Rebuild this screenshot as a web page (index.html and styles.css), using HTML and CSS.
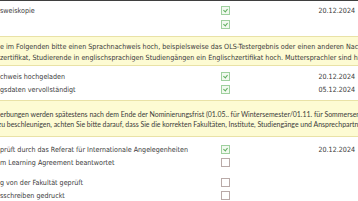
FILE: index.html
```html
<!DOCTYPE html>
<html lang="de">
<head>
<meta charset="utf-8">
<link rel="stylesheet" href="styles.css">
</head>
<body>
<div class="page">
  <div class="topline"></div>
  <div class="row r1"><span class="label">sweiskopie</span><span class="box on"></span><span class="date">20.12.2024</span></div>
  <div class="row r2"><span class="label"></span><span class="box on"></span><span class="date"></span></div>
  <div class="note note1">
    <p class="nl">e im Folgenden bitte einen Sprachnachweis hoch, beispielsweise das OLS-Testergebnis oder einen anderen Nachweis</p>
    <p class="nl">zertifikat, Studierende in englischsprachigen Studiengängen ein Englischzertifikat hoch. Muttersprachler sind hiervon befreit.</p>
  </div>
  <div class="row"><span class="label">chweis hochgeladen</span><span class="box on"></span><span class="date">20.12.2024</span></div>
  <div class="row"><span class="label">gsdaten vervollständigt</span><span class="box on"></span><span class="date">05.12.2024</span></div>
  <div class="note note2">
    <p class="nl">erbungen werden spätestens nach dem Ende der Nominierungsfrist (01.05.. für Wintersemester/01.11. für Sommersemester) bearbeitet.</p>
    <p class="nl shift">zu beschleunigen, achten Sie bitte darauf, dass Sie die korrekten Fakultäten, Institute, Studiengänge und Ansprechpartner angeben.</p>
  </div>
  <div class="row r5"><span class="label">prüft durch das Referat für Internationale Angelegenheiten</span><span class="box on"></span><span class="date">20.12.2024</span></div>
  <div class="row"><span class="label">m Learning Agreement beantwortet</span><span class="box"></span><span class="date"></span></div>
  <div class="row r7"><span class="label">g von der Fakultät geprüft</span><span class="box"></span><span class="date"></span></div>
  <div class="row"><span class="label">sschreiben gedruckt</span><span class="box"></span><span class="date"></span></div>
</div>
</body>
</html>
```

FILE: styles.css
```css
html, body {
  margin: 0;
  padding: 0;
  background: #ffffff;
}

.page {
  width: 358px;
  height: 201px;
  overflow: hidden;
  font-family: "DejaVu Sans", "Liberation Sans", sans-serif;
  font-stretch: condensed;
  font-size: 7.1px;
  color: #3a3a3a;
}

.topline {
  height: 1px;
  background: #3f3f3f;
}

.row {
  display: grid;
  grid-template-columns: 221px 9px 1fr;
  align-items: center;
  height: 13px;
}

.r1 {
  margin-top: 2px;
  height: 14px;
}

.r2 {
  height: 14px;
}

.r5 {
  margin-top: 7px;
}

.r7 {
  margin-top: 7px;
}

.label {
  white-space: nowrap;
  overflow: hidden;
}

.date {
  text-align: right;
  padding-right: 3px;
  white-space: nowrap;
}

.box {
  box-sizing: border-box;
  width: 9px;
  height: 9px;
  border: 1px solid #b9aaa8;
  background: #ffffff;
  position: relative;
}

.box.on {
  border-color: #9fd09f;
  background: #f1f9ef;
}

.box.on::after {
  content: "";
  position: absolute;
  left: 2px;
  top: 1px;
  width: 2px;
  height: 3px;
  border-right: 1px solid #5fae5f;
  border-bottom: 1px solid #5fae5f;
  transform: rotate(40deg);
}

.note {
  margin-left: -20px;
  margin-right: -20px;
  padding-left: 20px;
  background: #fdfbd3;
  border-top: 1px solid #e9e2a6;
  border-bottom: 1px solid #e9e2a6;
}

.nl {
  margin: 0;
  white-space: nowrap;
  overflow: hidden;
  line-height: 11px;
}

.note1 {
  margin-top: 5px;
  margin-bottom: 4px;
  padding-top: 4px;
  padding-bottom: 2px;
  font-size: 7.15px;
}

.note2 {
  margin-top: 4px;
  padding-top: 8px;
  padding-bottom: 7px;
  font-family: "Lato", "Open Sans", sans-serif;
  font-stretch: normal;
  font-size: 6.95px;
}

.note2 .nl {
  line-height: 10px;
}

.r5 {
  margin-top: 6px;
}

.shift {
  text-indent: -2px;
}
```
